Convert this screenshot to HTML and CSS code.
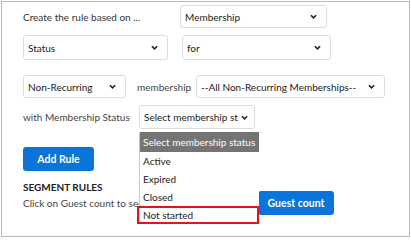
FILE: index.html
```html
<!DOCTYPE html>
<html>
<head>
<meta charset="utf-8">
<link rel="stylesheet" href="styles.css">
</head>
<body>
<div class="panel">
  <div class="row row1">
    <span class="label label-create">Create the rule based on ...</span>
    <div class="select sel-membership"><span>Membership</span><svg class="chev" viewBox="0 0 8 5"><path d="M1 1 L4 4 L7 1"/></svg></div>
  </div>
  <div class="row row2">
    <div class="select sel-status"><span>Status</span><svg class="chev" viewBox="0 0 8 5"><path d="M1 1 L4 4 L7 1"/></svg></div>
    <div class="select sel-for"><span>for</span><svg class="chev" viewBox="0 0 8 5"><path d="M1 1 L4 4 L7 1"/></svg></div>
  </div>
  <div class="row row3">
    <div class="select sel-nonrec"><span>Non-Recurring</span><svg class="chev" viewBox="0 0 8 5"><path d="M1 1 L4 4 L7 1"/></svg></div>
    <span class="label label-membership">membership</span>
    <div class="select sel-all"><span>--All Non-Recurring Memberships--</span><svg class="chev" viewBox="0 0 8 5"><path d="M1 1 L4 4 L7 1"/></svg></div>
  </div>
  <div class="row row4">
    <span class="label label-with">with Membership Status</span>
    <div class="select sel-mstatus"><span class="clip">Select membership status</span><svg class="chev" viewBox="0 0 8 5"><path d="M1 1 L4 4 L7 1"/></svg>
      <ul class="dropdown">
        <li class="opt opt-head">Select membership status</li>
        <li class="opt">Active</li>
        <li class="opt">Expired</li>
        <li class="opt">Closed</li>
        <li class="opt opt-marked">Not started</li>
      </ul>
    </div>
  </div>
  <button class="btn btn-add">Add Rule</button>
  <div class="seg-title">SEGMENT RULES</div>
  <div class="row row-guest">
    <span class="hint">Click on Guest count to see the guests of each rule</span>
    <button class="btn btn-guest">Guest count</button>
  </div>
</div>
</body>
</html>
```
FILE: styles.css
```css
* { box-sizing: border-box; }
html, body { margin: 0; padding: 0; background: #fff; }
body {
  font-family: Lato, "Open Sans", sans-serif;
  font-size: 10px;
  color: #333;
}
.panel {
  margin: 1px 0 0 1px;
  width: 409px;
  height: 236px;
  border: 1px solid #b9b9b9;
  padding: 3px 0 0 21px;
}
.row { display: flex; align-items: center; }
.label { white-space: nowrap; }
.select {
  position: relative;
  display: flex;
  align-items: center;
  height: 23px;
  border: 1px solid #dcdcdc;
  border-radius: 3px;
  padding: 0 0 0 4px;
  color: #222;
  background: #fff;
  white-space: nowrap;
}
.select > span { flex: 1; overflow: hidden; }
.chev {
  width: 7px;
  height: 5px;
  margin: 0 9px 0 4px;
  flex: none;
}
.chev path { fill: none; stroke: #222; stroke-width: 1.8; }

.label-create { width: 157px; }
.sel-membership { width: 147px; }

.row2 { margin-top: 7px; }
.sel-status { width: 145px; height: 25px; }
.sel-for { width: 149px; height: 25px; margin-left: 14px; }

.row3 { margin-top: 15px; }
.sel-nonrec { width: 103px; }
.label-membership { width: 59px; margin-left: 11px; color: #444; }
.sel-all { width: 189px; }

.row4 { margin-top: 7px; }
.label-with { width: 116px; color: #444; }
.sel-mstatus { width: 116px; height: 24px; }
.sel-mstatus .chev { margin-right: 6px; margin-left: 3px; }

.dropdown {
  position: absolute;
  top: 26px;
  left: -1px;
  width: 120px;
  margin: 0;
  padding: 0;
  list-style: none;
  background: #fff;
  border-left: 1px solid #c8c8c8;
  z-index: 2;
  color: #222;
  font-size: 10px;
}
.opt {
  height: 18px;
  line-height: 18px;
  padding-left: 3px;
  white-space: nowrap;
  overflow: hidden;
}
.opt-head {
  height: 20px;
  line-height: 20px;
  background: #747474;
  color: #fff;
  padding-left: 3px;
}
.opt-marked {
  margin-left: -3px;
  width: 122px;
  height: 18px;
  border: 2px solid #e2141c;
  line-height: 14px;
  padding-left: 4px;
}

.btn {
  font-family: Lato, "Open Sans", sans-serif;
  font-weight: bold;
  font-size: 10.5px;
  color: #fff;
  background: #0b74d8;
  border: none;
  border-radius: 3px;
  padding: 0;
}
.btn-add {
  display: block;
  margin-top: 18px;
  width: 71px;
  height: 24px;
}
.seg-title {
  margin-top: 10px;
  font-weight: bold;
  color: #222;
}
.row-guest { margin-top: -2px; }
.hint {
  width: 116px;
  margin-right: 119px;
  overflow: hidden;
  white-space: nowrap;
  color: #444;
}
.btn-guest { width: 76px; height: 24px; }
```
